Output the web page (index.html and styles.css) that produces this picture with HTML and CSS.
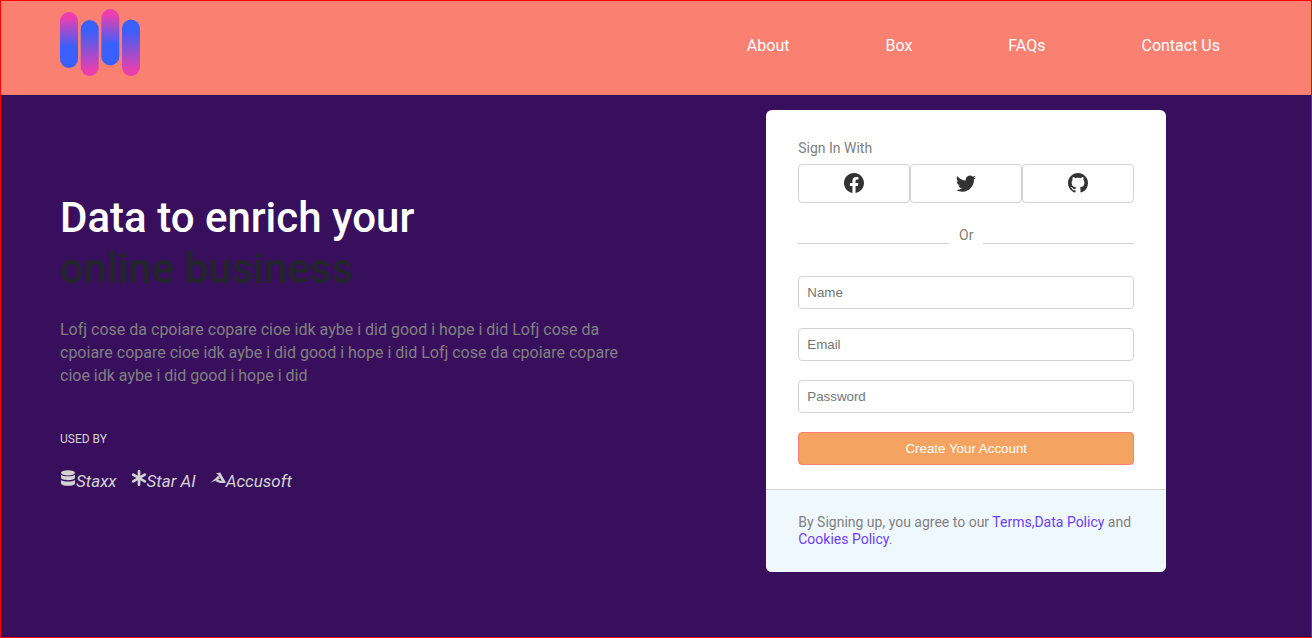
FILE: index.html
```html
<!DOCTYPE html>
<html lang="en">
<head>
<meta charset="utf-8">
<title>Data to enrich your online business</title>
<link rel="stylesheet" href="styles.css">
</head>
<body>
<div class="page">
  <header class="header">
    <a class="logo" href="#" aria-label="Home">
      <svg width="80" height="72" viewBox="0 0 80 72">
        <defs>
          <linearGradient id="down" x1="0" y1="0" x2="0" y2="1"><stop offset=".1" stop-color="#ec3fae"/><stop offset=".62" stop-color="#3b5ffa"/></linearGradient>
          <linearGradient id="up" x1="0" y1="0" x2="0" y2="1"><stop offset=".2" stop-color="#3b5ffa"/><stop offset=".9" stop-color="#e83fae"/></linearGradient>
        </defs>
        <rect x="0" y="3" width="18" height="56" rx="9" fill="url(#down)"/>
        <rect x="20.7" y="11" width="18" height="56" rx="9" fill="url(#up)"/>
        <rect x="41.3" y="0" width="18" height="56.500" rx="9" fill="url(#down)"/>
        <rect x="62" y="10.500" width="18" height="56.500" rx="9" fill="url(#up)"/>
      </svg>
    </a>
    <nav class="nav">
      <a href="#">About</a>
      <a href="#">Box</a>
      <a href="#">FAQs</a>
      <a href="#">Contact Us</a>
    </nav>
  </header>
  <main class="main">
    <section class="intro">
      <h1 class="title">Data to enrich your<br><span class="title-dark">online business</span></h1>
      <p class="text">Lofj cose da cpoiare copare cioe idk aybe i did good i hope i did Lofj cose da cpoiare copare cioe idk aybe i did good i hope i did Lofj cose da cpoiare copare cioe idk aybe i did good i hope i did</p>
      <h2 class="used">USED BY</h2>
      <ul class="brands">
        <li class="brand"><svg width="16" height="16" viewBox="0 0 16 16"><ellipse cx="8" cy="2.800" rx="7" ry="2.600"/><path d="M1 4.800c2.500 2 11.500 2 14 0v3c0 3.200-14 3.200-14 0z"/><path d="M1 10c2.500 2 11.500 2 14 0v3.200c0 3.500-14 3.500-14 0z"/></svg>Staxx</li>
        <li class="brand"><svg width="16" height="16" viewBox="0 0 16 16"><path d="M8 1.300v13.400M2.200 4.700l11.600 6.600M2.200 11.300l11.600-6.600" fill="none" stroke="currentColor" stroke-width="2.700" stroke-linecap="round"/></svg>Star AI</li>
        <li class="brand"><svg width="16" height="16" viewBox="0 0 16 16"><path d="M5.800 3.400L10.200 2.600 16 12.800 12.400 12 8 4.600z"/><path d="M0 13l6.500-5.400 1.500-2.200 2 3-2.600 1.700C5 10.900 2.200 11.700 0 13z"/><path d="M5 10.800l2.800-1 4.300 1.400 3.900 1.600c-3.500.6-8 .4-11-2z"/></svg>Accusoft</li>
      </ul>
    </section>
    <section class="signup">
      <form class="card">
        <div class="card-body">
          <p class="label">Sign In With</p>
          <div class="socials">
            <button class="social" type="button" aria-label="Facebook"><svg width="20" height="20" viewBox="0 0 16 16"><path d="M16 8.049c0-4.446-3.582-8.05-8-8.05C3.58 0-.002 3.603-.002 8.05c0 4.017 2.926 7.347 6.75 7.951v-5.625h-2.03V8.05H6.75V6.275c0-2.017 1.195-3.131 3.022-3.131.876 0 1.791.157 1.791.157v1.98h-1.009c-.993 0-1.303.621-1.303 1.258v1.51h2.218l-.354 2.326H9.25V16c3.824-.604 6.75-3.934 6.75-7.951z"/></svg></button>
            <button class="social" type="button" aria-label="Twitter"><svg width="20" height="20" viewBox="0 0 16 16"><path d="M5.026 15c6.038 0 9.341-5.003 9.341-9.334 0-.14 0-.282-.006-.422A6.685 6.685 0 0 0 16 3.542a6.658 6.658 0 0 1-1.889.518 3.301 3.301 0 0 0 1.447-1.817 6.533 6.533 0 0 1-2.087.793A3.286 3.286 0 0 0 7.875 6.03a9.325 9.325 0 0 1-6.767-3.429 3.289 3.289 0 0 0 1.018 4.382A3.323 3.323 0 0 1 .64 6.575v.045a3.288 3.288 0 0 0 2.632 3.218 3.203 3.203 0 0 1-.865.115 3.23 3.23 0 0 1-.614-.057 3.283 3.283 0 0 0 3.067 2.277A6.588 6.588 0 0 1 .78 13.58a6.32 6.32 0 0 1-.78-.045A9.344 9.344 0 0 0 5.026 15z"/></svg></button>
            <button class="social" type="button" aria-label="GitHub"><svg width="20" height="20" viewBox="0 0 16 16"><path d="M8 0C3.58 0 0 3.58 0 8c0 3.54 2.29 6.53 5.47 7.59.4.07.55-.17.55-.38 0-.19-.01-.82-.01-1.49-2.01.37-2.53-.49-2.69-.94-.09-.23-.48-.94-.82-1.13-.28-.15-.68-.52-.01-.53.63-.01 1.08.58 1.23.82.72 1.21 1.87.87 2.33.66.07-.52.28-.87.51-1.07-1.78-.2-3.64-.89-3.64-3.95 0-.87.31-1.59.82-2.15-.08-.2-.36-1.02.08-2.12 0 0 .67-.21 2.2.82.64-.18 1.32-.27 2-.27s1.36.09 2 .27c1.53-1.04 2.2-.82 2.2-.82.44 1.1.16 1.92.08 2.12.51.56.82 1.27.82 2.15 0 3.07-1.87 3.75-3.65 3.95.29.25.54.73.54 1.48 0 1.07-.01 1.93-.01 2.2 0 .21.15.46.55.38A8.01 8.01 0 0 0 16 8c0-4.42-3.58-8-8-8z"/></svg></button>
          </div>
          <div class="divider">Or</div>
          <div class="fields">
            <input class="field" type="text" placeholder="Name" aria-label="Name">
            <input class="field" type="email" placeholder="Email" aria-label="Email">
            <input class="field" type="password" placeholder="Password" aria-label="Password">
            <button class="submit" type="submit">Create Your Account</button>
          </div>
        </div>
        <p class="card-foot">By Signing up, you agree to our <a href="#">Terms,</a><a href="#">Data Policy</a> and <a href="#">Cookies Policy</a>.</p>
      </form>
    </section>
  </main>
</div>
</body>
</html>
```
FILE: styles.css
```css
* {
  box-sizing: border-box;
  margin: 0;
  padding: 0;
}

body {
  font-family: Roboto, sans-serif;
  font-size: 16px;
}

a {
  text-decoration: none;
}

.page {
  min-height: 100vh;
  border: 1px solid red;
  background: #380f5c;
}

.header {
  display: flex;
  align-items: center;
  justify-content: space-between;
  padding: 8px 91px 14px 59px;
  background: salmon;
}

.logo svg {
  display: block;
}

.nav {
  display: flex;
  gap: 96px;
}

.nav a {
  color: #fff;
}

.main {
  display: grid;
  grid-template-columns: 9fr 10fr;
  align-items: center;
  padding: 15px 0;
}

.intro {
  padding: 2px 0 0 59px;
}

.title {
  color: #fff;
  font-size: 42px;
  font-weight: 500;
  line-height: 51px;
}

.title-dark {
  color: #22252a;
}

.text {
  margin-top: 24px;
  color: gray;
  line-height: 23px;
}

.used {
  margin-top: 45px;
  color: lightgray;
  font-size: 12px;
  font-weight: 400;
  line-height: 14px;
}

.brands {
  display: flex;
  gap: 14px;
  margin-top: 24px;
  list-style: none;
  color: lightgray;
  font-size: 17px;
  font-style: italic;
}

.brand {
  display: flex;
  line-height: 22px;
}

.brand svg {
  fill: currentColor;
}

.signup {
  display: flex;
  justify-content: center;
}

.card {
  width: 400px;
  border-radius: 6px;
  overflow: hidden;
  background: #fff;
  color: gray;
  font-size: 14px;
  line-height: 17px;
}

.card-body {
  padding: 30px 32px 24px;
}

.socials {
  display: grid;
  grid-template-columns: repeat(3, 1fr);
  margin-top: 7px;
}

.social {
  display: flex;
  justify-content: center;
  padding: 8px 0 9px;
  border: 1px solid lightgray;
  border-radius: 4px;
  background: #fff;
}

.social svg {
  fill: #333;
}

.divider {
  display: flex;
  gap: 10px;
  margin: 24px 0 32px;
}

.divider::before,
.divider::after {
  content: "";
  flex: 1;
  border-bottom: 1px solid lightgray;
}

.fields {
  display: grid;
  gap: 19px;
}

.field,
.submit {
  width: 100%;
  padding: 8px;
  border: 1px solid lightgray;
  border-radius: 4px;
  font-family: "Liberation Sans", Arial, sans-serif;
  line-height: 15px;
}

.submit {
  border-color: salmon;
  background: sandybrown;
  color: #fff;
}

.card-foot {
  padding: 24px 32px;
  border-top: 1px solid lightgray;
  background: #f0f8ff;
}

.card-foot a {
  color: #6a40f5;
}
```
